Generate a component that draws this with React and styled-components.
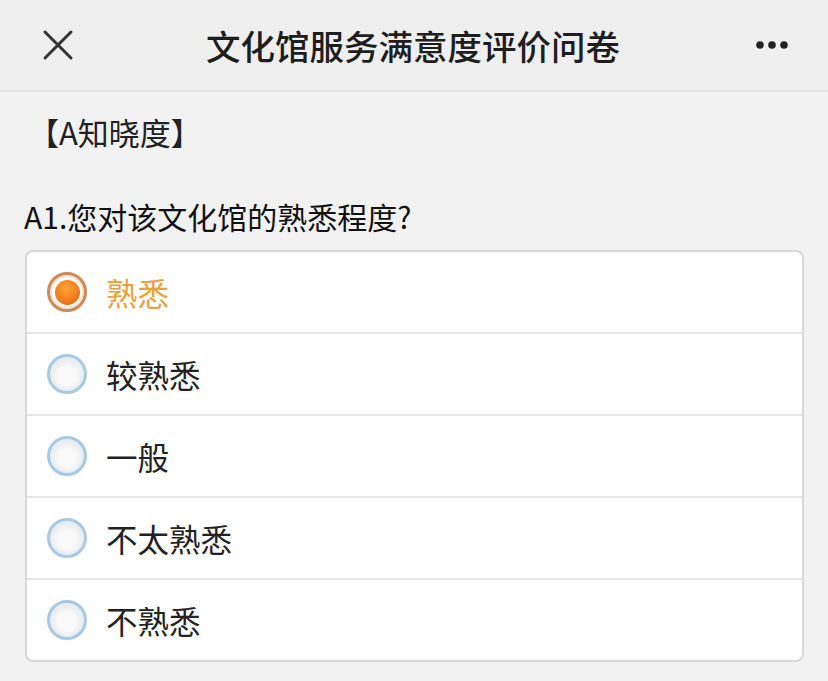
import React, { useState } from "react";
import styled, { createGlobalStyle } from "styled-components";

const GlobalStyle = createGlobalStyle`
  html, body {
    margin: 0;
    padding: 0;
    background: #f2f2f2;
  }
  body {
    font-family: "Noto Sans CJK SC", "Noto Sans", "Liberation Sans", sans-serif;
    color: #222;
  }
`;

/* barra de topo */
const TopBar = styled.div`
  height: 90px;
  display: flex;
  align-items: center;
  justify-content: space-between;
  padding: 0 36px 0 38px;
  background: #efefef;
  border-bottom: 2px solid #e2e2e2;
`;

const IconButton = styled.div`
  width: 40px;
  height: 40px;
  display: flex;
  align-items: center;
  justify-content: center;
  color: #333;
`;

const Title = styled.h1`
  margin: 0 0 0 -4px;
  font-size: 34.5px;
  font-weight: 500;
  color: #1e1e1e;
`;

const Page = styled.div`
  padding: 20px 24px 20px 24px;
`;

const Section = styled.div`
  font-size: 31px;
  line-height: 40px;
  padding-left: 4px;
  color: #222;
`;

const Question = styled.div`
  font-size: 30px;
  line-height: 40px;
  margin-top: 44px;
  color: #111;
`;

const Card = styled.div`
  margin: 14px 0 0 1px;
  background: #fff;
  border: 2px solid #d9d9d9;
  border-radius: 8px;
  overflow: hidden;
`;

const Row = styled.label`
  height: 80px;
  display: flex;
  align-items: center;
  gap: 19px;
  padding-left: 20px;
  cursor: pointer;
  & + & {
    border-top: 2px solid #e6e6e6;
  }
`;

const Radio = styled.span`
  width: 40px;
  height: 40px;
  border-radius: 50%;
  box-sizing: border-box;
  display: flex;
  align-items: center;
  justify-content: center;
  border: 3px solid ${(p) => (p.$on ? "#cf8a55" : "#a9c9e2")};
  background: ${(p) =>
    p.$on
      ? "radial-gradient(circle, #fff 58%, #f0d6c2 100%)"
      : "radial-gradient(circle at 50% 55%, #f9f9f9 35%, #d9dde2 100%)"};
  box-shadow: inset 0 0 0 2px ${(p) => (p.$on ? "#f3e2d6" : "#e6eef6")};
`;

const Dot = styled.span`
  width: 25px;
  height: 25px;
  border-radius: 50%;
  background: radial-gradient(circle at 45% 35%, #ffa437 0%, #f37d1a 55%, #dc5c0c 100%);
`;

const Label = styled.span`
  font-size: 31.5px;
  color: ${(p) => (p.$on ? "#e9a23b" : "#222")};
`;

const options = ["熟悉", "较熟悉", "一般", "不太熟悉", "不熟悉"];

export default function App() {
  const [picked, setPicked] = useState(0);

  return (
    <>
      <GlobalStyle />
      <TopBar>
        <IconButton>
          <svg width="32" height="32" viewBox="0 0 32 32">
            <path d="M3 3 L29 29 M29 3 L3 29" stroke="#333" strokeWidth="3" strokeLinecap="round" />
          </svg>
        </IconButton>
        <Title>文化馆服务满意度评价问卷</Title>
        <IconButton>
          <svg width="34" height="10" viewBox="0 0 34 10">
            <circle cx="5" cy="5" r="3.8" fill="#222" />
            <circle cx="17" cy="5" r="3.8" fill="#222" />
            <circle cx="29" cy="5" r="3.8" fill="#222" />
          </svg>
        </IconButton>
      </TopBar>
      <Page>
        <Section>【A知晓度】</Section>
        <Question>A1.您对该文化馆的熟悉程度?</Question>
        <Card>
          {options.map((o, i) => (
            <Row key={o} onClick={() => setPicked(i)}>
              <Radio $on={picked === i}>{picked === i && <Dot />}</Radio>
              <Label $on={picked === i}>{o}</Label>
            </Row>
          ))}
        </Card>
      </Page>
    </>
  );
}
